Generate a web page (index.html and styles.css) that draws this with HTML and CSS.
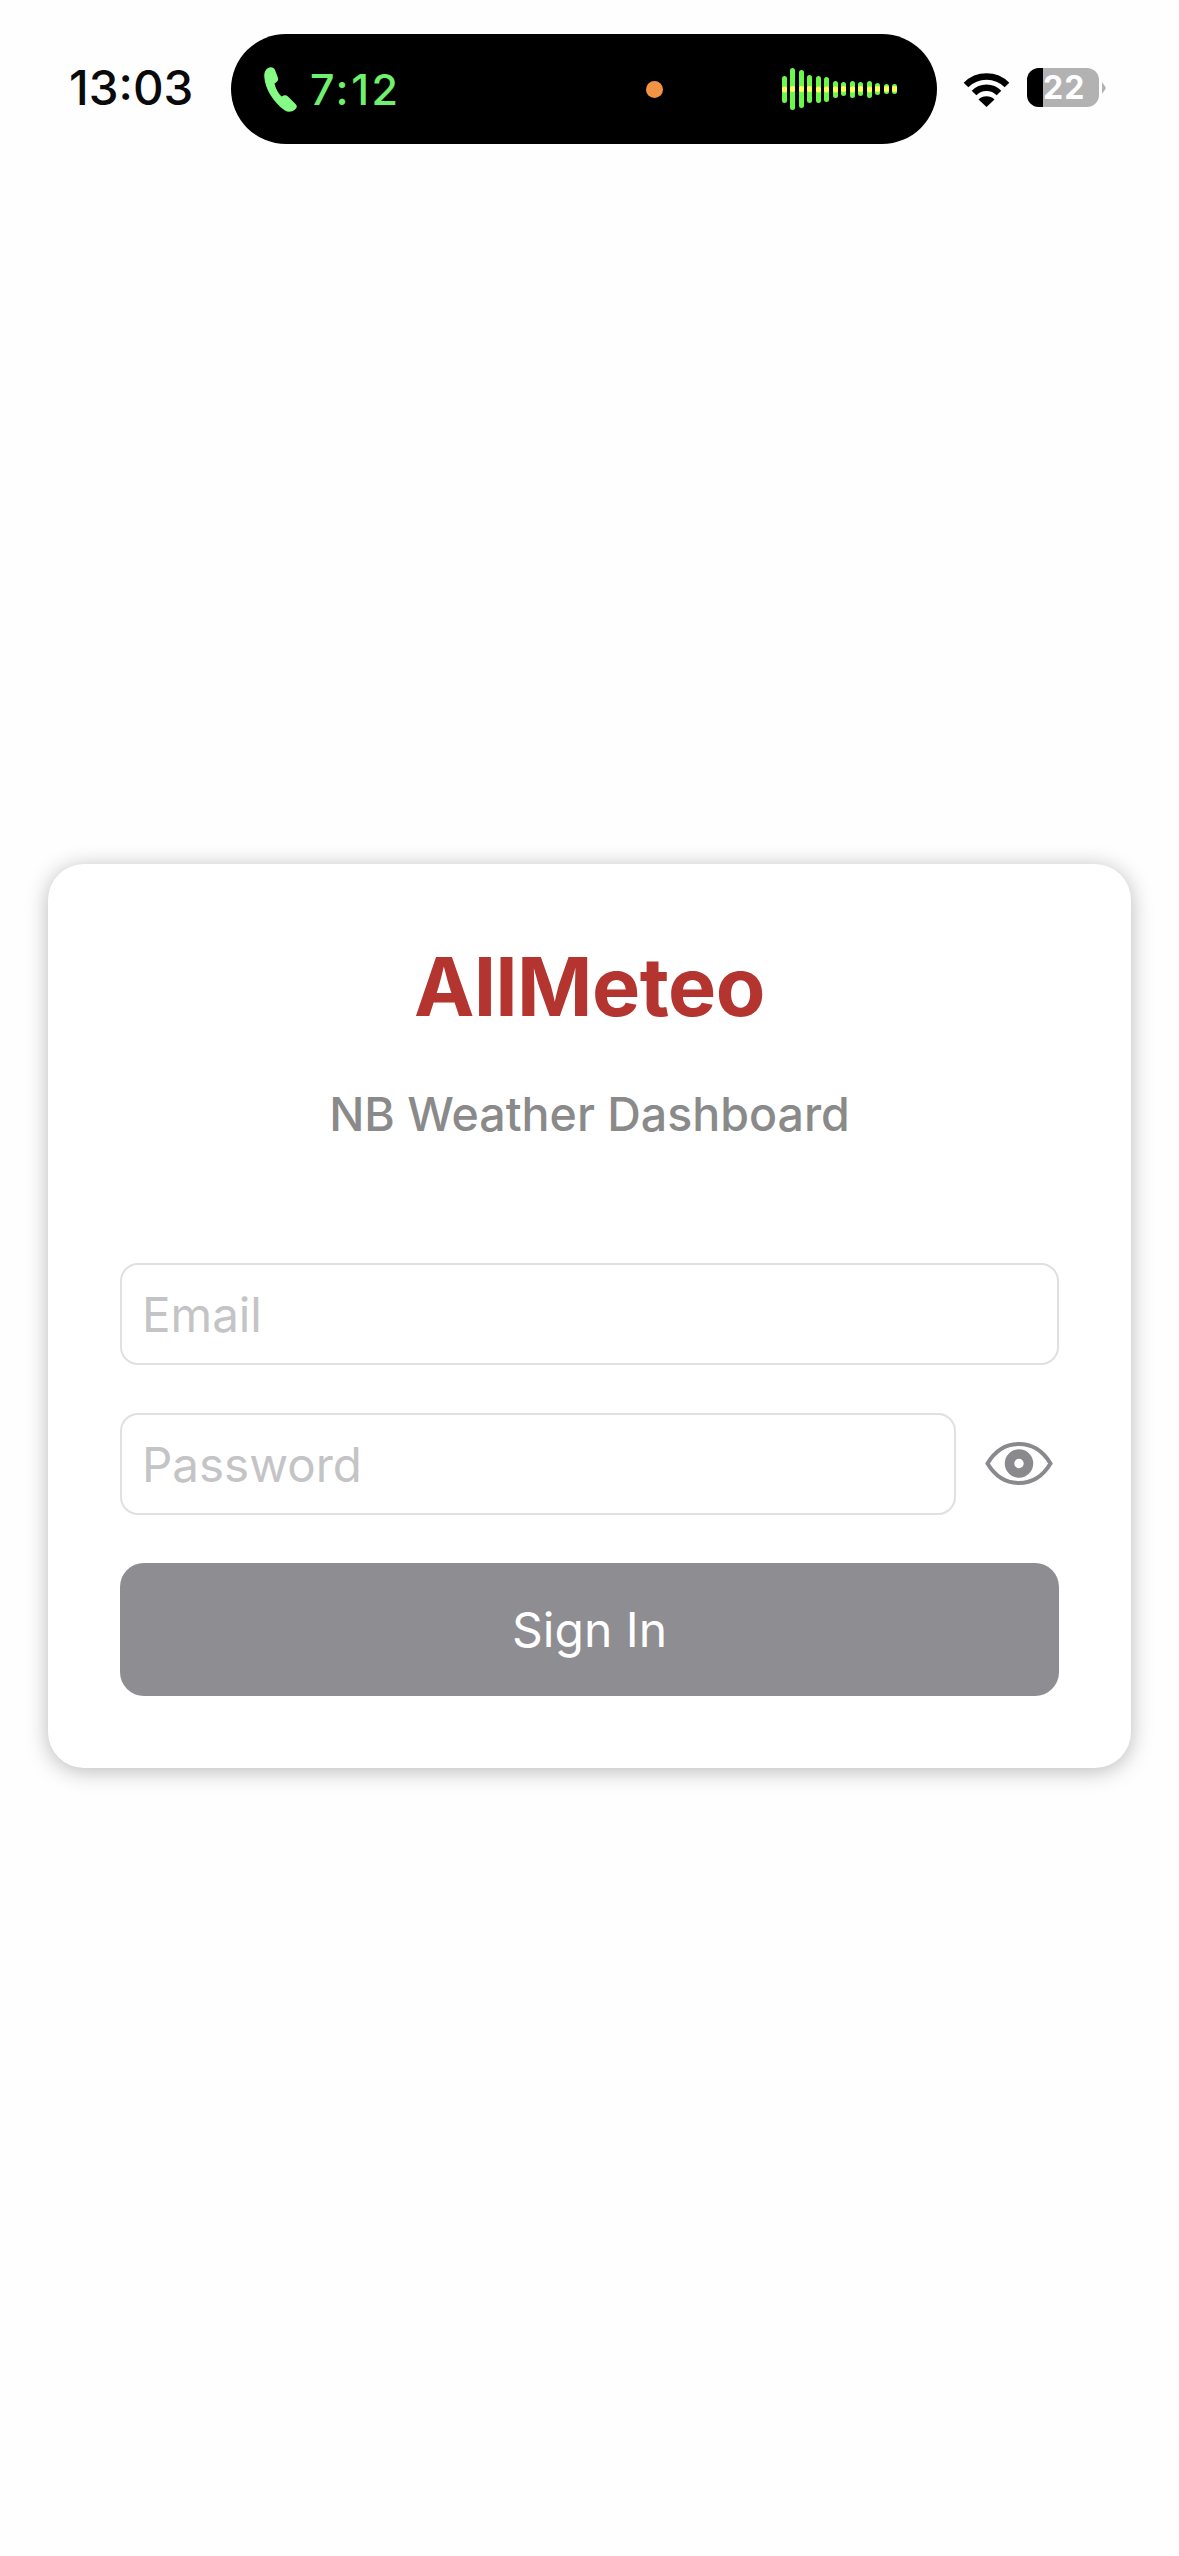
FILE: index.html
```html
<!DOCTYPE html>
<html lang="en">
<head>
    <meta charset="UTF-8">
    <meta name="viewport" content="width=device-width, initial-scale=1.0">
    <title>AllMeteo</title>
    <link rel="stylesheet" href="styles.css">
</head>
<body>
    <header class="status-bar">
        <span class="time">13:03</span>
        <div class="island">
            <svg class="phone" viewBox="0 0 33 45">
                <path d="M4 1C7-.5 10 .5 11 3L14 11C14.500 13 13.500 14.500 12 15.500L10.500 16.500C11.500 21 14 26 17.500 29.500L19.500 28.500C21 28 22.500 28.200 24 29.500L31.500 37C33.500 39 33 41 31 42.500C28 45 24 45.500 21 43.500C10 36 1 22 .3 10C0 6 1 3 4 1Z"/>
            </svg>
            <span class="call-time">7:12</span>
            <span class="mic-dot"></span>
            <div class="wave">
                <i style="height:27px"></i>
                <i style="height:42px"></i>
                <i style="height:38px"></i>
                <i style="height:28px"></i>
                <i style="height:27px"></i>
                <i style="height:25px"></i>
                <i style="height:17px"></i>
                <i style="height:14px"></i>
                <i style="height:17px"></i>
                <i style="height:14px"></i>
                <i style="height:17px"></i>
                <i style="height:12px"></i>
                <i style="height:10px"></i>
                <i style="height:10px"></i>
            </div>
        </div>
        <svg class="wifi" viewBox="0 0 47 35">
            <path class="wifi-arc" d="M3 13A29 29 0 0 1 44 13"/>
            <path class="wifi-arc" d="M11 21A17.700 17.700 0 0 1 36 21"/>
            <path d="M15.500 27.500A11.500 11.500 0 0 1 31.500 27.500L23.500 35Z"/>
        </svg>
        <div class="battery">
            <div class="battery-body">
                <span class="battery-used"></span>
                <span class="battery-level">22</span>
            </div>
            <span class="battery-tip"></span>
        </div>
    </header>

    <main class="page">
        <form class="card">
            <h1>AllMeteo</h1>
            <p class="subtitle">NB Weather Dashboard</p>
            <input class="field" type="text" placeholder="Email">
            <div class="password-row">
                <input class="field" type="password" placeholder="Password">
                <svg class="eye" viewBox="0 0 68 43">
                    <path class="eye-line" d="M2.500 21.500C10 9 21 2 34 2S58 9 65.500 21.500C58 34 47 41 34 41S10 34 2.500 21.500Z"/>
                    <circle class="eye-pupil" cx="34" cy="21.500" r="9.500"/>
                </svg>
            </div>
            <button class="sign-in" type="button">Sign In</button>
        </form>
    </main>
</body>
</html>
```
FILE: styles.css
```css
body {
    font-family: 'Inter', 'Liberation Sans', sans-serif;
    background-color: #fefefe;
    margin: 0;
    min-height: 100vh;
}

.status-bar {
    display: flex;
    align-items: center;
    padding: 34px 0 0 69px;
}

.time {
    width: 124px;
    margin: 0 38px 3px 0;
    font-size: 47.500px;
    font-weight: 550;
    color: #0a0a0a;
    white-space: nowrap;
}

.island {
    display: flex;
    align-items: center;
    box-sizing: border-box;
    width: 706px;
    height: 110px;
    padding: 0 40px 0 33px;
    background-color: #000;
    border-radius: 55px;
}

.phone {
    width: 33px;
    height: 45px;
    margin-right: 13px;
    fill: #85fb85;
}

.call-time {
    font-size: 43px;
    font-weight: 500;
    letter-spacing: 2.500px;
    color: #6ff06f;
}

.mic-dot {
    width: 17px;
    height: 17px;
    margin-left: auto;
    background-color: #f39445;
    border-radius: 50%;
}

.wave {
    display: flex;
    align-items: center;
    gap: 3.500px;
    margin-left: 119px;
}

.wave i {
    width: 5px;
    border-radius: 3px;
    background: radial-gradient(circle at center, #ffff5a 0, #ffff5a 2.500px, #6bf84a 3.500px);
}

.wifi {
    width: 47px;
    height: 35px;
    margin-left: 26px;
}

.wifi-arc {
    fill: none;
    stroke: #000;
    stroke-width: 6.500;
}

.battery {
    display: flex;
    align-items: center;
    margin: 0 0 3px 17px;
}

.battery-body {
    display: flex;
    align-items: center;
    width: 72px;
    height: 39px;
    background-color: #b2b2b2;
    border-radius: 12px;
    overflow: hidden;
}

.battery-used {
    width: 16px;
    height: 100%;
    background-color: #000;
}

.battery-level {
    font-size: 32px;
    font-weight: 700;
    color: #fff;
    letter-spacing: 1px;
}

.battery-tip {
    width: 0;
    height: 0;
    margin-left: 3px;
    border-top: 6px solid transparent;
    border-bottom: 6px solid transparent;
    border-left: 4px solid #b2b2b2;
}

.page {
    padding: 720px 48px 0;
}

.card {
    box-sizing: border-box;
    height: 904px;
    padding: 74px 72px 0;
    background-color: #fff;
    border-radius: 36px;
    box-shadow: 0 3px 22px rgba(0, 0, 0, 0.28);
}

h1 {
    margin: 0;
    font-size: 81px;
    line-height: 98px;
    font-weight: 700;
    letter-spacing: -0.5px;
    color: #b43530;
    text-align: center;
}

.subtitle {
    margin: 49px 0 0;
    font-size: 46.500px;
    line-height: 58px;
    font-weight: 500;
    color: #8a8a8a;
    text-align: center;
}

.field {
    display: block;
    box-sizing: border-box;
    width: 100%;
    height: 102px;
    margin: 0;
    padding: 0 20px;
    background-color: #fff;
    border: 2px solid #e0e0e2;
    border-radius: 18px;
    font-family: inherit;
    font-size: 47.500px;
    color: #000;
    outline: none;
}

.field::placeholder {
    color: #c4c4c6;
    opacity: 1;
}

.card > .field {
    margin-top: 120px;
}

.password-row {
    display: flex;
    align-items: center;
    margin-top: 48px;
}

.password-row .field {
    width: 836px;
}

.eye {
    width: 68px;
    height: 43px;
    margin: 0 0 1px 29px;
}

.eye-line {
    fill: none;
    stroke: #8a8a8e;
    stroke-width: 4;
}

.eye-pupil {
    fill: none;
    stroke: #8a8a8e;
    stroke-width: 9.500;
}

.sign-in {
    display: block;
    width: 100%;
    height: 133px;
    margin-top: 48px;
    padding: 0;
    background-color: #8e8d92;
    border: none;
    border-radius: 24px;
    font-family: inherit;
    font-size: 48px;
    color: #fff;
}
```
